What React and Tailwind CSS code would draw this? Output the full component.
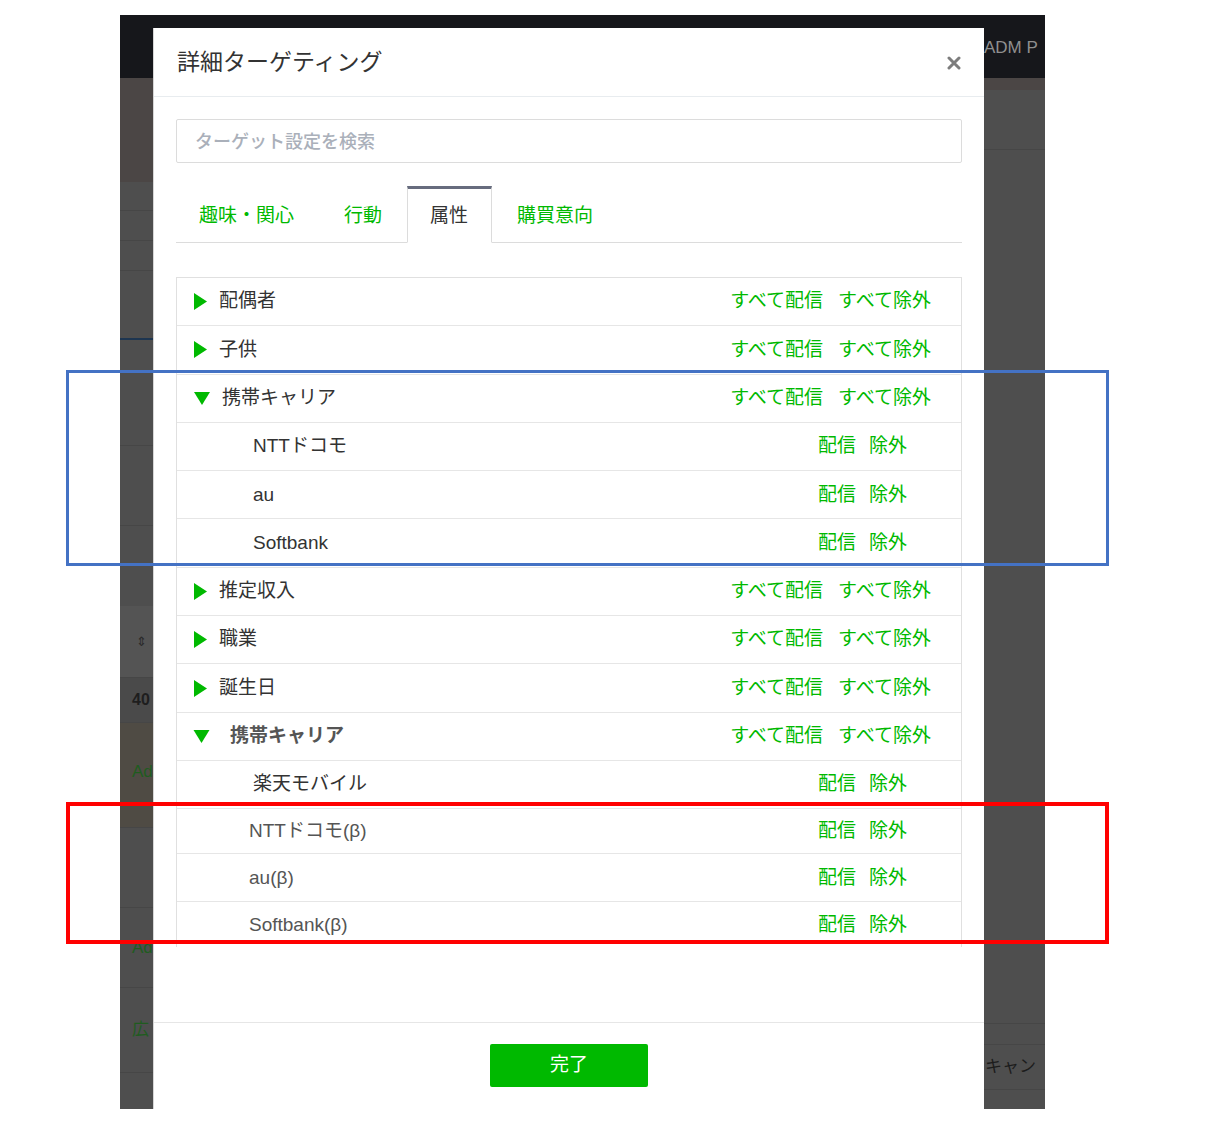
import React from 'react';

const GREEN = 'text-[#00b900]';

const rows = [
  { kind: 'group', label: '配偶者' },
  { kind: 'group', label: '子供' },
  { kind: 'group', label: '携帯キャリア', open: true },
  { kind: 'item', label: 'NTTドコモ' },
  { kind: 'item', label: 'au' },
  { kind: 'item', label: 'Softbank' },
  { kind: 'group', label: '推定収入' },
  { kind: 'group', label: '職業' },
  { kind: 'group', label: '誕生日' },
  { kind: 'group2', label: '携帯キャリア', open: true },
  { kind: 'item', label: '楽天モバイル' },
  { kind: 'beta', label: 'NTTドコモ(β)', h: 'h-[45px]' },
  { kind: 'beta', label: 'au(β)', h: 'h-[48px]' },
  { kind: 'beta', label: 'Softbank(β)', h: 'h-[46px]', last: true },
];

const Caret = ({ open, wide }) =>
  open ? (
    <svg width={wide ? 17 : 16} height="13" viewBox="0 0 16 13" className="shrink-0">
      <polygon points="0,0 16,0 8,13" fill="#00b900" />
    </svg>
  ) : (
    <svg width="13" height="17" viewBox="0 0 13 17" className="shrink-0">
      <polygon points="0,0 13,8.5 0,17" fill="#00b900" />
    </svg>
  );

const TargetRow = ({ row }) => {
  const border = row.last ? '' : 'border-b border-[#e6e6e6]';
  if (row.kind === 'group' || row.kind === 'group2') {
    const second = row.kind === 'group2';
    return (
      <div className={`flex h-[48.3px] items-center justify-between pr-[30px] ${second ? 'pl-[16px]' : 'pl-[17px]'} ${border}`}>
        <div className={`flex items-center ${second ? 'gap-[20px]' : 'gap-[12px]'}`}>
          <Caret open={row.open} wide={second} />
          <span className={second ? 'font-semibold text-[#555]' : 'text-[#333]'}>{row.label}</span>
        </div>
        <div className={`flex gap-[15px] ${GREEN}`}>
          <span>すべて配信</span>
          <span>すべて除外</span>
        </div>
      </div>
    );
  }
  const beta = row.kind === 'beta';
  return (
    <div className={`flex items-center justify-between pr-[54px] ${beta ? `${row.h} pl-[72px] text-[#555]` : 'h-[48.3px] pl-[76px] text-[#333]'} ${border}`}>
      <span>{row.label}</span>
      <div className={`flex gap-[13px] ${GREEN}`}>
        <span>配信</span>
        <span>除外</span>
      </div>
    </div>
  );
};

const Band = ({ h, bg = 'bg-[#4e4e4e]', line = true, children, className = '' }) => (
  <div className={`${h} ${bg} ${line ? 'border-b border-[#464646]' : ''} flex items-center overflow-hidden whitespace-nowrap ${className}`}>
    {children}
  </div>
);

const LeftStrip = () => (
  <div className="flex w-[33px] shrink-0 flex-col">
    <Band h="h-[104px]" bg="bg-[#4b4645]" line={false} />
    <Band h="h-[29px]" />
    <Band h="h-[30px]" />
    <Band h="h-[30px]" />
    <Band h="h-[67px]" line={false} />
    <div className="h-[2px] bg-[#1d3550]" />
    <Band h="h-[106px]" />
    <Band h="h-[80px]" />
    <Band h="h-[80px]" line={false} />
    <Band h="h-[72px]" bg="bg-[#545454]" className="pl-[16px] text-[13px] text-[#2a2a2a]">
      <span>⇕</span>
    </Band>
    <Band h="h-[45px]" bg="bg-[#4a4a4a]" className="pl-[12px] text-[16px] font-bold text-[#1e1e1e]">
      <span>40</span>
    </Band>
    <Band h="h-[105px]" bg="bg-[#4f4b44]" className="pb-[6px] pl-[12px] text-[17px] text-[#1f5c1f]">
      <span>Ad</span>
    </Band>
    <Band h="h-[80px]" />
    <Band h="h-[80px]" className="pl-[12px] text-[17px] text-[#1f5c1f]">
      <span>Ad</span>
    </Band>
    <Band h="h-[85px]" className="pl-[12px] text-[17px] text-[#1f5c1f]">
      <span>広</span>
    </Band>
    <Band h="h-[34px]" line={false} />
  </div>
);

const RightStrip = () => (
  <div className="flex w-[61px] shrink-0 flex-col">
    <Band h="h-[12px]" bg="bg-[#4b4645]" line={false} />
    <Band h="h-[60px]" />
    <Band h="h-[873px]" line={false} />
    <Band h="h-[22px]" className="border-t border-[#464646]" />
    <Band h="h-[45px]" className="pl-[1px] text-[17px] text-[#1c1c1c]">
      <span>キャン</span>
    </Band>
    <Band h="h-[19px]" line={false} />
  </div>
);

const Modal = () => (
  <div className="absolute left-[33px] top-[13px] flex h-[1081px] w-[831px] flex-col border-l border-[#d6d6d6] bg-white">
    <div className="flex h-[69px] shrink-0 items-center justify-between border-b border-[#e8ecef] pl-[23px] pr-[23px]">
      <h1 className="text-[23px] font-normal text-[#333]">詳細ターゲティング</h1>
      <svg width="14" height="14" viewBox="0 0 14 14" className="mt-[2px]">
        <path d="M2 2 L12 12 M12 2 L2 12" stroke="#7d7d7d" strokeWidth="3" strokeLinecap="round" />
      </svg>
    </div>

    <div className="flex-1 pl-[22px] pr-[22px] pt-[22px]">
      <div className="flex h-[44px] items-center rounded-[2px] border border-[#dcdcdc] pl-[18px] pt-[2px] text-[18px] font-medium text-[#aab0ba]">
        ターゲット設定を検索
      </div>

      <div className="mt-[23px] flex h-[57px] border-b border-[#dcdcdc] text-[19px]">
        <div className={`flex items-center border border-transparent pl-[22px] pr-[22px] pt-[4px] ${GREEN}`}>趣味・関心</div>
        <div className={`flex items-center border border-transparent pl-[26px] pr-[24px] pt-[4px] ${GREEN}`}>行動</div>
        <div className="-mb-px flex items-center border-x border-b border-t-[3px] border-x-[#dcdcdc] border-b-white border-t-[#676c7e] bg-white pl-[22px] pr-[23px] pt-[2px] text-[#333]">
          属性
        </div>
        <div className={`flex items-center border border-transparent pl-[24px] pt-[4px] ${GREEN}`}>購買意向</div>
      </div>

      <div className="mt-[34px] h-[670px] overflow-hidden border-x border-t border-[#e0e0e0] text-[19px]">
        {rows.map((row, i) => (
          <TargetRow key={i} row={row} />
        ))}
      </div>
    </div>

    <div className="flex h-[87px] shrink-0 justify-center border-t border-[#e6e6e6] pt-[21px]">
      <button className="h-[43px] w-[158px] rounded-[2px] bg-[#00b900] text-[19px] text-white">完了</button>
    </div>
  </div>
);

export default function App() {
  return (
    <div className="relative h-[1125px] w-[1206px] overflow-hidden bg-white pl-[120px] pt-[15px] font-['Liberation_Sans','Noto_Sans_CJK_JP',sans-serif]">
      <div className="relative flex h-[1094px] w-[925px] flex-col overflow-hidden bg-[#4e4e4e]">
        <div className="flex h-[63px] shrink-0 items-center justify-end bg-[#16171b] pt-[2px]">
          <span className="w-[61px] whitespace-nowrap text-[17px] text-[#8f8f8f]">ADM P</span>
        </div>
        <div className="flex flex-1 justify-between">
          <LeftStrip />
          <RightStrip />
        </div>
        <Modal />
      </div>

      <div className="pointer-events-none absolute left-[66px] top-[370px] h-[196px] w-[1043px] border-[3px] border-[#4472c4]" />
      <div className="pointer-events-none absolute left-[66px] top-[802px] h-[142px] w-[1043px] border-[4px] border-[#ff0000]" />
    </div>
  );
}
